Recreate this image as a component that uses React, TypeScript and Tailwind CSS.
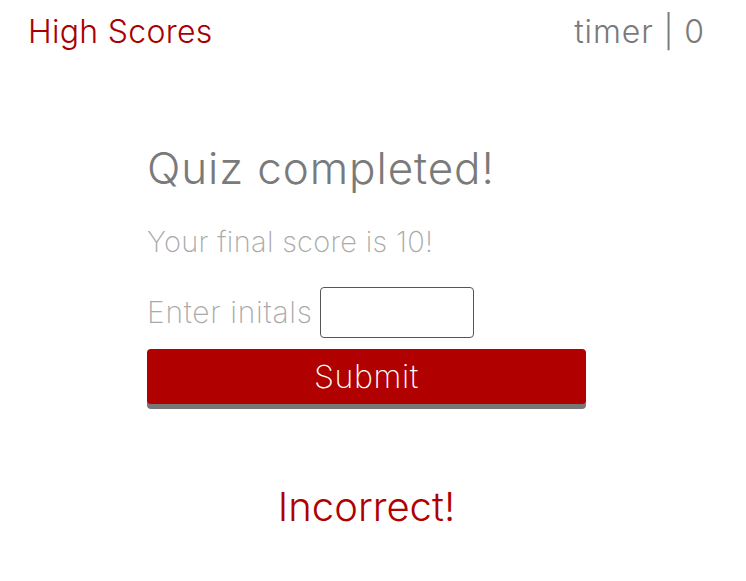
export default function App() {
  return (
    <div
      className="min-h-[581px] w-[746px] bg-white font-light text-[#777]"
      style={{ fontFamily: "Inter, 'Open Sans', sans-serif" }}
    >
      <header className="flex items-start justify-between pl-[28px] pr-[41px] pt-[10px]">
        <a className="text-[32px] leading-[44px] tracking-[0.3px] text-[#a80000]">High Scores</a>
        <div className="text-[32px] leading-[44px] tracking-[0.9px] text-[#7a7a7a]">timer | 0</div>
      </header>

      <main className="ml-[147px] mt-[86px] w-[439px]">
        <h1 className="text-[44px] leading-[56px] tracking-[0.9px] text-[#7a7a7a]">Quiz completed!</h1>
        <p className="mt-[26px] text-[29px] font-extralight leading-[40px] tracking-[0.3px] text-[#aaa]">
          Your final score is 10!
        </p>
        <div className="mt-[25px] flex items-center gap-[7px]">
          <label className="text-[30px] font-extralight tracking-[0.7px] text-[#aaa]">Enter initals</label>
          <input
            type="text"
            className="h-[51px] w-[154px] rounded-[4px] border border-[#555] bg-white"
          />
        </div>
        <button className="mt-[11px] h-[55px] w-full rounded-[4px] bg-[#b00000] text-[32px] font-extralight tracking-[0.6px] text-white shadow-[0_5px_0_#777]">
          Submit
        </button>
        <div className="mt-[73px] text-center text-[40px] text-[#b00000]">Incorrect!</div>
      </main>
    </div>
  );
}
